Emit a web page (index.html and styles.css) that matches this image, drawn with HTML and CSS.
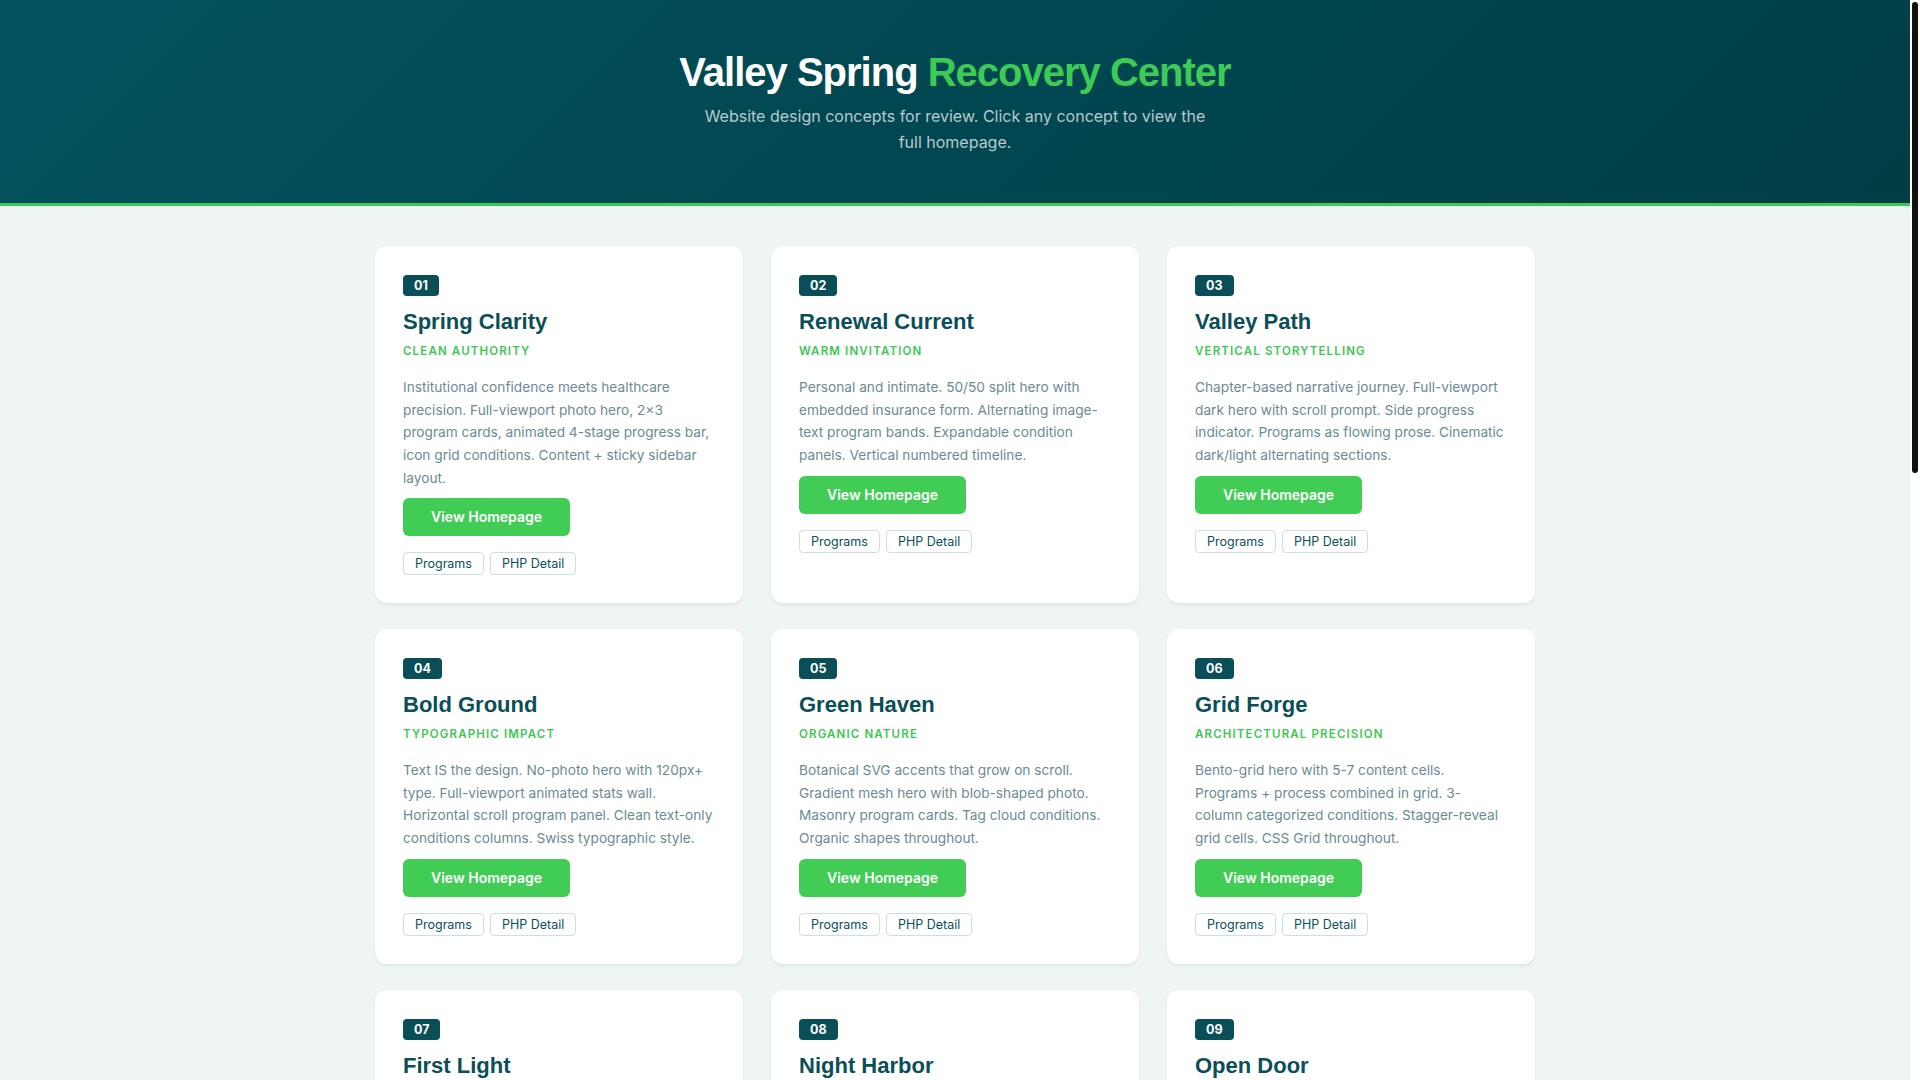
FILE: index.html
```html
<!DOCTYPE html>
<html lang="en">

<head>
    <meta charset="UTF-8">
    <meta name="viewport" content="width=device-width, initial-scale=1.0">
    <title>Valley Spring Recovery Center - Design Concepts</title>
    <link rel="stylesheet" href="styles.css">
</head>

<body>
    <header class="hero">
        <h1>Valley Spring <span>Recovery Center</span></h1>
        <p>Website design concepts for review. Click any concept to view the full homepage.</p>
    </header>

    <main class="concepts">
        <div class="card">
            <span class="num">01</span>
            <h2>Spring Clarity</h2>
            <div class="tagline">Clean Authority</div>
            <p class="desc">Institutional confidence meets healthcare precision. Full-viewport photo hero, 2×3 program cards, animated 4-stage progress bar, icon grid conditions. Content + sticky sidebar layout.</p>
            <a class="btn" href="javascript:;">View Homepage</a>
            <div class="links"><a href="javascript:;">Programs</a><a href="javascript:;">PHP Detail</a></div>
        </div>
        <div class="card">
            <span class="num">02</span>
            <h2>Renewal Current</h2>
            <div class="tagline">Warm Invitation</div>
            <p class="desc">Personal and intimate. 50/50 split hero with embedded insurance form. Alternating image-text program bands. Expandable condition panels. Vertical numbered timeline.</p>
            <a class="btn" href="javascript:;">View Homepage</a>
            <div class="links"><a href="javascript:;">Programs</a><a href="javascript:;">PHP Detail</a></div>
        </div>
        <div class="card">
            <span class="num">03</span>
            <h2>Valley Path</h2>
            <div class="tagline">Vertical Storytelling</div>
            <p class="desc">Chapter-based narrative journey. Full-viewport dark hero with scroll prompt. Side progress indicator. Programs as flowing prose. Cinematic dark/light alternating sections.</p>
            <a class="btn" href="javascript:;">View Homepage</a>
            <div class="links"><a href="javascript:;">Programs</a><a href="javascript:;">PHP Detail</a></div>
        </div>
        <div class="card">
            <span class="num">04</span>
            <h2>Bold Ground</h2>
            <div class="tagline">Typographic Impact</div>
            <p class="desc">Text IS the design. No-photo hero with 120px+ type. Full-viewport animated stats wall. Horizontal scroll program panel. Clean text-only conditions columns. Swiss typographic style.</p>
            <a class="btn" href="javascript:;">View Homepage</a>
            <div class="links"><a href="javascript:;">Programs</a><a href="javascript:;">PHP Detail</a></div>
        </div>
        <div class="card">
            <span class="num">05</span>
            <h2>Green Haven</h2>
            <div class="tagline">Organic Nature</div>
            <p class="desc">Botanical SVG accents that grow on scroll. Gradient mesh hero with blob-shaped photo. Masonry program cards. Tag cloud conditions. Organic shapes throughout.</p>
            <a class="btn" href="javascript:;">View Homepage</a>
            <div class="links"><a href="javascript:;">Programs</a><a href="javascript:;">PHP Detail</a></div>
        </div>
        <div class="card">
            <span class="num">06</span>
            <h2>Grid Forge</h2>
            <div class="tagline">Architectural Precision</div>
            <p class="desc">Bento-grid hero with 5-7 content cells. Programs + process combined in grid. 3-column categorized conditions. Stagger-reveal grid cells. CSS Grid throughout.</p>
            <a class="btn" href="javascript:;">View Homepage</a>
            <div class="links"><a href="javascript:;">Programs</a><a href="javascript:;">PHP Detail</a></div>
        </div>
        <div class="card">
            <span class="num">07</span>
            <h2>First Light</h2>
            <div class="tagline">Soft Morning</div>
            <p class="desc">Airy pastel palette with sunrise gradient hero. Floating program cards with gentle parallax. Accordion conditions list. Quiet testimonials carousel.</p>
            <a class="btn" href="javascript:;">View Homepage</a>
            <div class="links"><a href="javascript:;">Programs</a><a href="javascript:;">PHP Detail</a></div>
        </div>
        <div class="card">
            <span class="num">08</span>
            <h2>Night Harbor</h2>
            <div class="tagline">Dark Mode Calm</div>
            <p class="desc">Deep navy canvas with glowing accents. Full-bleed video hero. Tabbed program switcher. Icon list conditions. Sticky call-to-action bar.</p>
            <a class="btn" href="javascript:;">View Homepage</a>
            <div class="links"><a href="javascript:;">Programs</a><a href="javascript:;">PHP Detail</a></div>
        </div>
        <div class="card">
            <span class="num">09</span>
            <h2>Open Door</h2>
            <div class="tagline">Friendly Access</div>
            <p class="desc">Conversational copy with big rounded buttons. Step-by-step admissions wizard. Program cards with quick facts. FAQ-driven conditions section.</p>
            <a class="btn" href="javascript:;">View Homepage</a>
            <div class="links"><a href="javascript:;">Programs</a><a href="javascript:;">PHP Detail</a></div>
        </div>
        <div class="card">
            <span class="num">10</span>
            <h2>Still Water</h2>
            <div class="tagline">Minimal Zen</div>
            <p class="desc">Generous whitespace and muted tones. Single-column hero with breathing animation. Simple program list. Calm two-column conditions grid.</p>
            <a class="btn" href="javascript:;">View Homepage</a>
            <div class="links"><a href="javascript:;">Programs</a><a href="javascript:;">PHP Detail</a></div>
        </div>
        <div class="card">
            <span class="num">11</span>
            <h2>Summit Rise</h2>
            <div class="tagline">Momentum</div>
            <p class="desc">Diagonal section breaks and upward motion. Mountain photo hero with outcome stats. Program ladder graphic. Milestone-based recovery timeline.</p>
            <a class="btn" href="javascript:;">View Homepage</a>
            <div class="links"><a href="javascript:;">Programs</a><a href="javascript:;">PHP Detail</a></div>
        </div>
        <div class="card">
            <span class="num">12</span>
            <h2>Common Table</h2>
            <div class="tagline">Community Voice</div>
            <p class="desc">Alumni stories front and center. Quote-wall hero with portrait mosaic. Group program highlights. Family support section with event calendar.</p>
            <a class="btn" href="javascript:;">View Homepage</a>
            <div class="links"><a href="javascript:;">Programs</a><a href="javascript:;">PHP Detail</a></div>
        </div>
        <div class="card">
            <span class="num">13</span>
            <h2>Clear Signal</h2>
            <div class="tagline">Data Driven</div>
            <p class="desc">Outcomes dashboard hero with live counters. Chart-backed program comparisons. Insurance checker widget. Structured conditions table.</p>
            <a class="btn" href="javascript:;">View Homepage</a>
            <div class="links"><a href="javascript:;">Programs</a><a href="javascript:;">PHP Detail</a></div>
        </div>
        <div class="card">
            <span class="num">14</span>
            <h2>Riverstone</h2>
            <div class="tagline">Grounded Warmth</div>
            <p class="desc">Earthy textures and stone-toned palette. Wide landscape hero. Program cards with hand-drawn icons. Campus tour gallery strip.</p>
            <a class="btn" href="javascript:;">View Homepage</a>
            <div class="links"><a href="javascript:;">Programs</a><a href="javascript:;">PHP Detail</a></div>
        </div>
        <div class="card">
            <span class="num">15</span>
            <h2>New Chapter</h2>
            <div class="tagline">Editorial Layout</div>
            <p class="desc">Magazine-style columns and pull quotes. Serif headline hero. Long-form program features. Staff profiles as bylines.</p>
            <a class="btn" href="javascript:;">View Homepage</a>
            <div class="links"><a href="javascript:;">Programs</a><a href="javascript:;">PHP Detail</a></div>
        </div>
        <div class="card">
            <span class="num">16</span>
            <h2>Safe Harbor</h2>
            <div class="tagline">Trust First</div>
            <p class="desc">Accreditation badges above the fold. Clinical team hero. Program pathways flowchart. Detailed insurance and admissions FAQ.</p>
            <a class="btn" href="javascript:;">View Homepage</a>
            <div class="links"><a href="javascript:;">Programs</a><a href="javascript:;">PHP Detail</a></div>
        </div>
        <div class="card">
            <span class="num">17</span>
            <h2>Bright Path</h2>
            <div class="tagline">Playful Color</div>
            <p class="desc">Bold color blocks and friendly illustrations. Split-color hero. Rounded program tiles. Interactive conditions selector.</p>
            <a class="btn" href="javascript:;">View Homepage</a>
            <div class="links"><a href="javascript:;">Programs</a><a href="javascript:;">PHP Detail</a></div>
        </div>
        <div class="card">
            <span class="num">18</span>
            <h2>Quiet Strength</h2>
            <div class="tagline">Understated Luxury</div>
            <p class="desc">Refined neutrals with gold accents. Slow-fade photo hero. Private program suites. Concierge-style admissions contact panel.</p>
            <a class="btn" href="javascript:;">View Homepage</a>
            <div class="links"><a href="javascript:;">Programs</a><a href="javascript:;">PHP Detail</a></div>
        </div>
    </main>

    <!-- window scrollbar, drawn since the headless shot hides the real one -->
    <div class="scrollbar"><span></span></div>
</body>

</html>
```

FILE: styles.css
```css
html {
    background: #eff5f4;
}

body {
    margin: 0 10px 0 0;
    background: #eff5f4;
    font-family: Inter, "Noto Sans", sans-serif;
    color: #0a4f57;
}

.scrollbar {
    position: fixed;
    top: 0;
    right: 0;
    width: 10px;
    height: 100vh;
    background: #fff;
}

.scrollbar span {
    display: block;
    height: 471px;
    margin: 2px 2px 0;
    background: #111;
    border-radius: 3px;
}

.hero {
    padding: 48px 20px;
    text-align: center;
    background: linear-gradient(135deg, #035360 0%, #014852 45%, #003e46 100%);
    border-bottom: 3px solid #3ecb55;
}

.hero h1 {
    margin: 0;
    font-family: "Liberation Sans", Arial, sans-serif;
    font-size: 40px;
    line-height: 48px;
    font-weight: 700;
    letter-spacing: -0.025em;
    color: #fff;
}

.hero h1 span {
    color: #3ecb55;
}

.hero p {
    max-width: 510px;
    margin: 8px auto 0;
    font-size: 16px;
    line-height: 25.6px;
    color: rgba(255, 255, 255, 0.72);
}

.concepts {
    display: grid;
    grid-template-columns: repeat(3, 1fr);
    gap: 26px 28px;
    max-width: 1160px;
    margin: 0 auto;
    padding: 40px 20px 48px;
}

.card {
    padding: 28px;
    background: #fff;
    border-radius: 12px;
    box-shadow: 0 2px 3px rgba(10, 60, 70, 0.08);
}

.num {
    display: inline-block;
    padding: 3px 11px;
    font-size: 12.5px;
    line-height: 15px;
    font-weight: 700;
    color: #fff;
    background: #0a4f57;
    border-radius: 4px;
}

.card h2 {
    margin: 12px 0 0;
    font-family: "Liberation Sans", Arial, sans-serif;
    font-size: 22px;
    line-height: 28px;
    font-weight: 700;
    color: #0a4f57;
}

.tagline {
    margin-top: 7px;
    font-size: 11.5px;
    line-height: 16px;
    font-weight: 600;
    letter-spacing: 0.1em;
    text-transform: uppercase;
    color: #3ec653;
}

.desc {
    margin: 17px 0 9px;
    font-size: 13.7px;
    line-height: 22.6px;
    color: #6b8b92;
}

.btn {
    display: inline-block;
    padding: 10px 28px;
    font-size: 14px;
    line-height: 18px;
    font-weight: 600;
    color: #fff;
    text-decoration: none;
    background: #41cc55;
    border-radius: 6px;
}

.links {
    display: flex;
    gap: 6px;
    margin-top: 16px;
}

.links a {
    padding: 3px 11px;
    font-size: 12.5px;
    line-height: 15px;
    color: #0a4f57;
    text-decoration: none;
    border: 1px solid #cddfe1;
    border-radius: 4px;
}
```
